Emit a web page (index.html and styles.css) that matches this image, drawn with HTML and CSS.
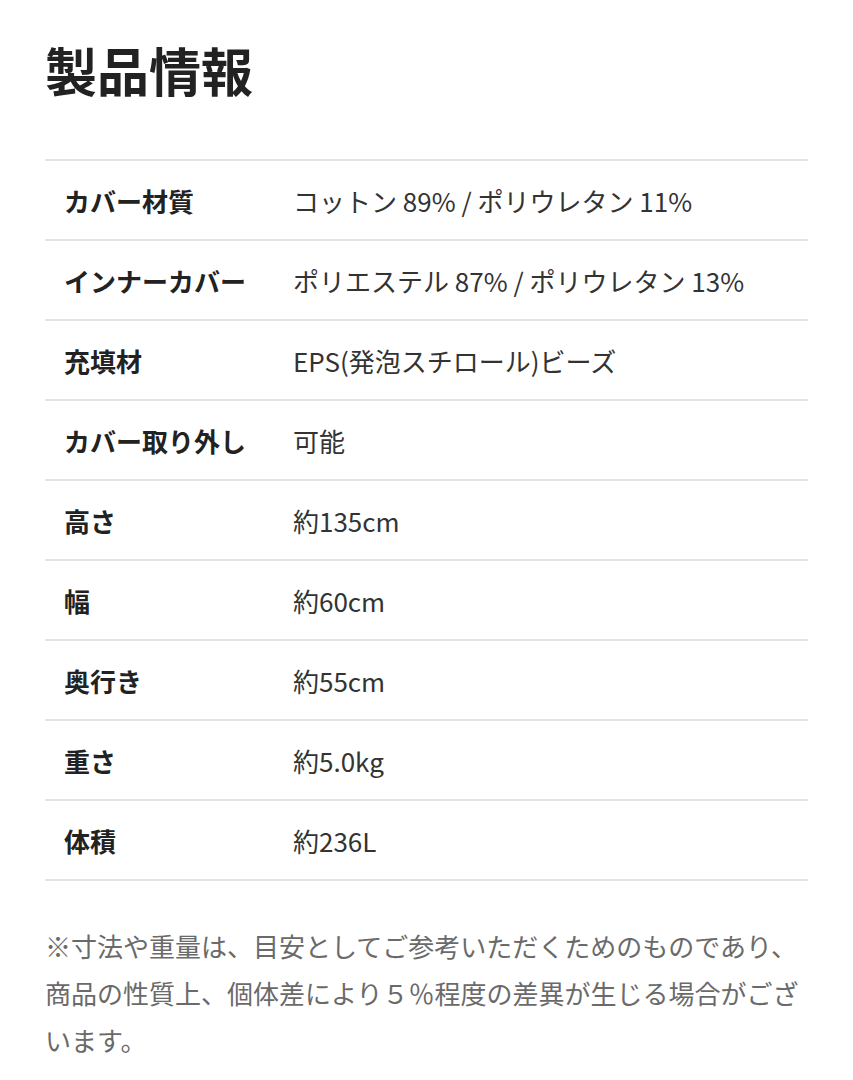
FILE: index.html
```html
<!DOCTYPE html>
<html lang="ja">
<head>
<meta charset="utf-8">
<title>製品情報</title>
<link rel="stylesheet" href="styles.css">
</head>
<body>
<main class="page">
  <h1 class="title">製品情報</h1>
  <div class="spec">
    <div class="row"><div class="label">カバー材質</div><div class="value">コットン 89% / ポリウレタン 11%</div></div>
    <div class="row"><div class="label">インナーカバー</div><div class="value">ポリエステル 87% / ポリウレタン 13%</div></div>
    <div class="row"><div class="label">充填材</div><div class="value">EPS(発泡スチロール)ビーズ</div></div>
    <div class="row"><div class="label">カバー取り外し</div><div class="value">可能</div></div>
    <div class="row"><div class="label">高さ</div><div class="value">約135cm</div></div>
    <div class="row"><div class="label">幅</div><div class="value">約60cm</div></div>
    <div class="row"><div class="label">奥行き</div><div class="value">約55cm</div></div>
    <div class="row"><div class="label">重さ</div><div class="value">約5.0kg</div></div>
    <div class="row"><div class="label">体積</div><div class="value">約236L</div></div>
  </div>
  <p class="note">※寸法や重量は、目安としてご参考いただくためのものであり、商品の性質上、個体差により５％程度の差異が生じる場合がございます。</p>
</main>
</body>
</html>
```
FILE: styles.css
```css
html, body {
  margin: 0;
  padding: 0;
  background: #ffffff;
}
body {
  font-family: "Noto Sans CJK JP", "Noto Sans", sans-serif;
  color: #222;
}
.page {
  padding: 39px 45px 0 45px;
}
.title {
  margin: 0 0 58px 0;
  font-size: 52px;
  line-height: 62px;
  font-weight: 700;
  color: #222;
}
.spec {
  border-bottom: 2px solid #e3e3e3;
}
.row {
  display: grid;
  grid-template-columns: 248px 1fr;
  align-items: center;
  height: 78px;
  border-top: 2px solid #e3e3e3;
}
.label {
  padding-left: 19px;
  font-size: 26px;
  font-weight: 700;
  color: #222;
}
.value {
  font-size: 26px;
  font-weight: 400;
  color: #333;
}
.note {
  margin: 41px 0 0 0;
  font-size: 26px;
  line-height: 47px;
  color: #6a6a6a;
}
```
